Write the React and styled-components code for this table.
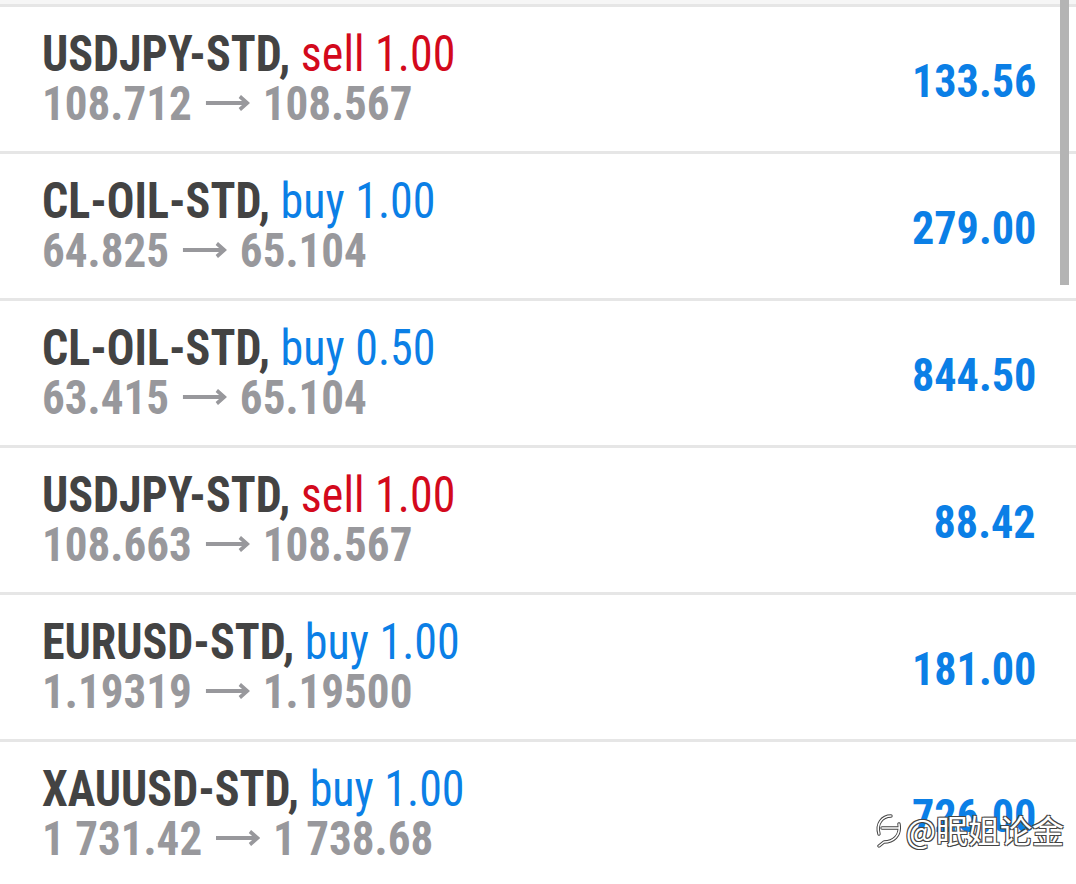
import React from 'react'
import styled, { createGlobalStyle } from 'styled-components'

const trades = [
  { symbol: 'USDJPY-STD', side: 'sell', volume: '1.00', open: '108.712', close: '108.567', profit: '133.56' },
  { symbol: 'CL-OIL-STD', side: 'buy', volume: '1.00', open: '64.825', close: '65.104', profit: '279.00' },
  { symbol: 'CL-OIL-STD', side: 'buy', volume: '0.50', open: '63.415', close: '65.104', profit: '844.50' },
  { symbol: 'USDJPY-STD', side: 'sell', volume: '1.00', open: '108.663', close: '108.567', profit: '88.42' },
  { symbol: 'EURUSD-STD', side: 'buy', volume: '1.00', open: '1.19319', close: '1.19500', profit: '181.00' },
  { symbol: 'XAUUSD-STD', side: 'buy', volume: '1.00', open: '1 731.42', close: '1 738.68', profit: '726.00' },
]

const GlobalStyle = createGlobalStyle`
  html, body {
    margin: 0;
    padding: 0;
    background: #ffffff;
    overflow: hidden;
  }
  body {
    font-family: "Roboto Condensed", Roboto, "Liberation Sans", sans-serif;
    font-stretch: condensed;
  }
`

const Screen = styled.div`
  position: relative;
  width: 1076px;
  height: 884px;
  overflow: hidden;
  background: #ffffff;
`

const Peek = styled.div`
  height: 4px;
  background: #f6f6f6;
`

const Row = styled.div`
  display: flex;
  align-items: center;
  justify-content: space-between;
  height: 144px;
  padding: 0 40px 0 42px;
  border-top: 3px solid #e6e6e6;
`

// the app font is narrower than the installed condensed face
const Info = styled.div`
  display: flex;
  flex-direction: column;
  transform: scaleX(0.92);
  transform-origin: left center;
`

const Title = styled.div`
  font-size: 50px;
  line-height: 50px;
  font-weight: 700;
  color: #434343;
  white-space: nowrap;
`

const Side = styled.span`
  font-weight: 400;
  color: ${p => (p.$sell ? '#d3091c' : '#0b7fe6')};
`

const Prices = styled.div`
  font-size: 49px;
  line-height: 50px;
  font-weight: 700;
  color: #98989c;
  white-space: nowrap;
`

const ArrowIcon = styled.svg`
  width: 48px;
  height: 16px;
  margin: 0 14px 0 15px;
  vertical-align: 9px;
`

const Profit = styled.div`
  font-size: 47px;
  line-height: 48px;
  font-weight: 700;
  color: #0b7fe6;
  margin-top: 4px;
  transform: scaleX(0.94);
  transform-origin: right center;
`

const Scrollbar = styled.div`
  position: absolute;
  top: 0;
  right: 7px;
  width: 9px;
  height: 285px;
  background: #b4b4b4;
`

const Watermark = styled.div`
  position: absolute;
  right: 12px;
  bottom: 32px;
  display: flex;
  align-items: center;
  gap: 4px;
  font-family: "Noto Sans CJK SC", sans-serif;
  font-stretch: normal;
  font-size: 32px;
  font-weight: 400;
  color: #ffffff;
  text-shadow: -1px -1px 0 #444, 1px -1px 0 #444, -1px 1px 0 #444, 1px 1px 0 #444;
`

function Arrow() {
  return (
    <ArrowIcon viewBox="0 0 48 16" fill="none" stroke="#98989c" strokeWidth="4">
      <path d="M0 8 H45" />
      <path d="M37 1.5 L45 8 L37 14.5" strokeLinejoin="miter" />
    </ArrowIcon>
  )
}

function Mark() {
  const a = 'M9 25 C6 15 12 7 21 7'
  const b = 'M12 19 H29'
  const c = 'M29 15 C31 27 23 33 14 33 L9 37'
  return (
    <svg width="32" height="40" viewBox="0 0 32 40" fill="none" strokeLinecap="round" strokeLinejoin="round">
      {[a, b, c].map(d => (
        <path key={d + 'o'} d={d} stroke="#444" strokeWidth="3.4" />
      ))}
      {[a, b, c].map(d => (
        <path key={d + 'i'} d={d} stroke="#fff" strokeWidth="1.5" />
      ))}
    </svg>
  )
}

export default function App() {
  return (
    <Screen>
      <GlobalStyle />
      <Peek />
      {trades.map((t, i) => (
        <Row key={i}>
          <Info>
            <Title>
              {t.symbol}, <Side $sell={t.side === 'sell'}>{t.side} {t.volume}</Side>
            </Title>
            <Prices>
              {t.open}
              <Arrow />
              {t.close}
            </Prices>
          </Info>
          <Profit>{t.profit}</Profit>
        </Row>
      ))}
      <Scrollbar />
      <Watermark>
        <Mark />
        <span>@眠姐论金</span>
      </Watermark>
    </Screen>
  )
}
